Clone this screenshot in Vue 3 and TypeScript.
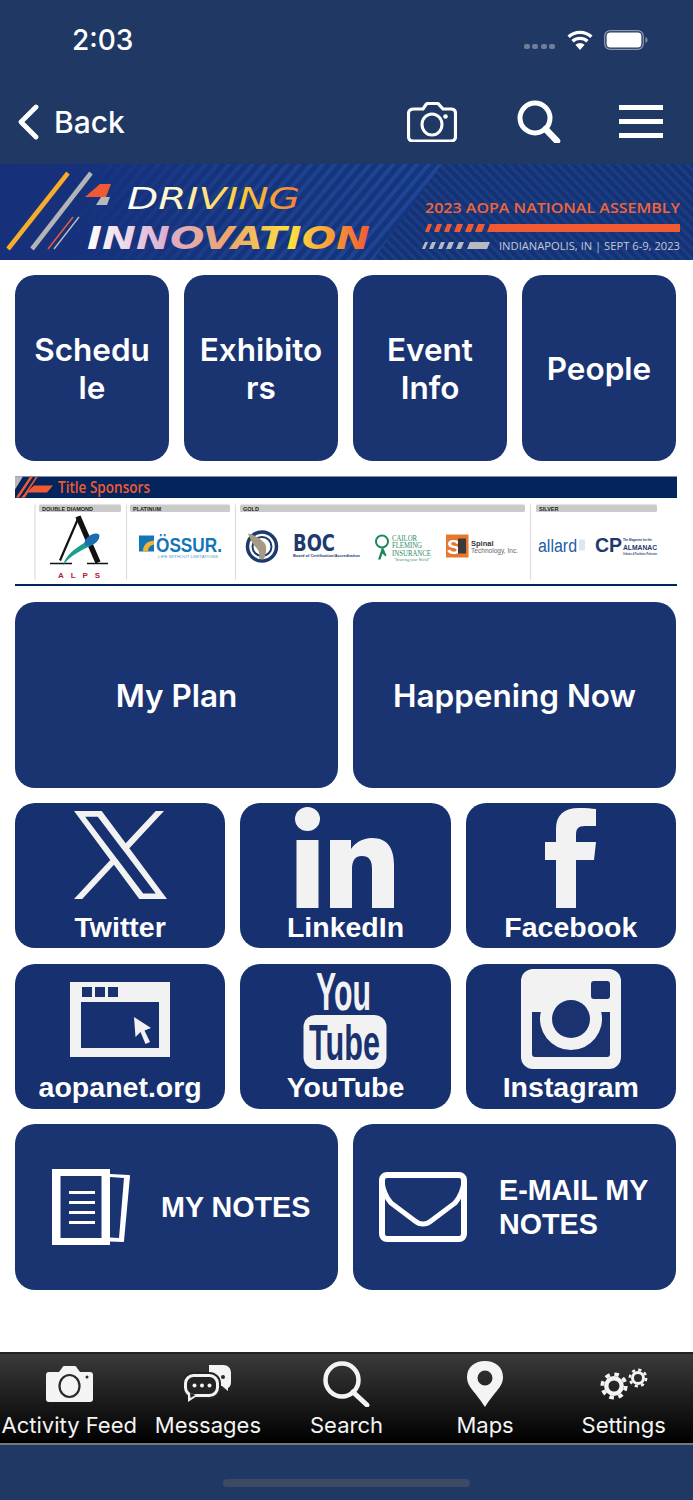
<script setup lang="ts">
const topTiles: string[][] = [['Schedu', 'le'], ['Exhibito', 'rs'], ['Event', 'Info'], ['People']]
const wideTiles: string[] = ['My Plan', 'Happening Now']
const tabs: string[] = ['Activity Feed', 'Messages', 'Search', 'Maps', 'Settings']
</script>

<template>
  <div class="page">
    <header class="head">
      <div class="status">
        <span class="time">2:03</span>
        <div class="status-icons">
          <span class="dots"><i></i><i></i><i></i><i></i></span>
          <svg class="wifi" width="28" height="20" viewBox="0 0 28 20">
            <path d="M14 20l-4.6-5.2a7 7 0 0 1 9.2 0z" fill="#fff" />
            <path d="M6.6 11.2a11 11 0 0 1 14.8 0M2.6 6.8a17 17 0 0 1 22.8 0" fill="none" stroke="#fff" stroke-width="3.4" />
          </svg>
          <svg class="battery" width="44" height="20" viewBox="0 0 44 20">
            <rect x="0.7" y="0.7" width="38.6" height="18.6" rx="5.5" fill="none" stroke="#8b97ad" stroke-width="1.3" />
            <rect x="2.6" y="2.6" width="34.8" height="14.8" rx="3.6" fill="#fff" />
            <path d="M41.5 7v6c1.3-.5 2-1.7 2-3s-.7-2.500-2-3z" fill="#8b97ad" />
          </svg>
        </div>
      </div>
      <nav class="nav">
        <div class="back">
          <svg width="22" height="36" viewBox="0 0 22 36"><path d="M19 3L4 18l15 15" fill="none" stroke="#fff" stroke-width="4.800" stroke-linecap="round" stroke-linejoin="round" /></svg>
          <span>Back</span>
        </div>
        <div class="nav-icons">
          <svg width="50" height="40" viewBox="0 0 50 40">
            <path d="M7 7h9l3-4.500c.4-.6 1-1 1.800-1h9.400c.8 0 1.400.4 1.800 1L36 7h8c2.800 0 4.500 1.700 4.500 4.500v23c0 2.800-1.700 4.500-4.500 4.500H6c-2.800 0-4.500-1.700-4.500-4.500v-23C1.500 8.700 3.500 7 7 7z" fill="none" stroke="#fff" stroke-width="3.200" />
            <ellipse cx="25" cy="22.500" rx="10" ry="10.500" fill="none" stroke="#fff" stroke-width="3" />
            <circle cx="38.500" cy="14.500" r="2.300" fill="#fff" />
          </svg>
          <svg width="44" height="43" viewBox="0 0 44 43">
            <circle cx="18" cy="18" r="15" fill="none" stroke="#fff" stroke-width="5" />
            <path d="M28.500 29L40 41" stroke="#fff" stroke-width="6.500" stroke-linecap="round" />
          </svg>
          <div class="burger"><i></i><i></i><i></i></div>
        </div>
      </nav>
    </header>

    <svg class="banner" width="693" height="96" viewBox="0 164 693 96">
      <defs>
        <pattern id="stripeA" width="9" height="9" patternUnits="userSpaceOnUse" patternTransform="rotate(-50)">
          <rect width="9" height="4" fill="#2a55a8" opacity=".55" />
        </pattern>
        <pattern id="stripeB" width="7" height="7" patternUnits="userSpaceOnUse" patternTransform="rotate(45)">
          <rect width="7" height="3" fill="#2b57ad" opacity=".3" />
        </pattern>
        <linearGradient id="leftBg" x1="0" y1="0" x2="1" y2="0">
          <stop offset="0" stop-color="#17307a" />
          <stop offset=".6" stop-color="#14367f" />
          <stop offset="1" stop-color="#0f44a0" />
        </linearGradient>
        <linearGradient id="fadeIn" x1="0" y1="0" x2="1" y2="0">
          <stop offset="0" stop-color="#fff" stop-opacity="0" />
          <stop offset=".5" stop-color="#fff" stop-opacity=".7" />
          <stop offset="1" stop-color="#fff" stop-opacity="1" />
        </linearGradient>
        <mask id="fadeMask">
          <rect x="60" y="164" width="390" height="96" fill="url(#fadeIn)" />
        </mask>
        <linearGradient id="driveFill" gradientUnits="userSpaceOnUse" x1="127" y1="0" x2="300" y2="0">
          <stop offset="0" stop-color="#ffffff" />
          <stop offset=".3" stop-color="#fff5c0" />
          <stop offset=".65" stop-color="#ffcd36" />
          <stop offset="1" stop-color="#f47c3c" />
        </linearGradient>
        <linearGradient id="innoFill" gradientUnits="userSpaceOnUse" x1="87" y1="0" x2="370" y2="0">
          <stop offset="0" stop-color="#ffffff" />
          <stop offset=".28" stop-color="#dcaed0" />
          <stop offset=".5" stop-color="#eda46b" />
          <stop offset=".72" stop-color="#fde23f" />
          <stop offset="1" stop-color="#f15a30" />
        </linearGradient>
      </defs>
      <rect x="0" y="164" width="693" height="96" fill="url(#leftBg)" />
      <rect x="60" y="164" width="390" height="96" fill="url(#stripeA)" mask="url(#fadeMask)" />
      <path d="M442 164H693V260H373z" fill="#143274" />
      <path d="M442 164H693V260H373z" fill="url(#stripeB)" />
      <path d="M68 173L8 249" stroke="#f7ac2a" stroke-width="4.500" />
      <path d="M91 173L32 249" stroke="#b3b4b8" stroke-width="4.500" />
      <path d="M73 217L48 249" stroke="#e85b37" stroke-width="1.500" />
      <path d="M79 217L54 249" stroke="#c2c2c6" stroke-width="1.300" />
      <path d="M100 184h11l-5 13H85z" fill="#ef5a32" />
      <path d="M101 197h9l-3 8H96z" fill="#b7b8bc" />
      <text class="b-drive" x="127" y="209" textLength="173" lengthAdjust="spacingAndGlyphs" fill="url(#driveFill)">DRIVING</text>
      <text class="b-inno" x="87" y="249" textLength="283" lengthAdjust="spacingAndGlyphs" fill="url(#innoFill)">INNOVATION</text>
      <text class="b-title" x="425" y="213" textLength="255" lengthAdjust="spacingAndGlyphs">2023 AOPA NATIONAL ASSEMBLY</text>
      <path d="M490 224H680V232H487z" fill="#ef5a32" />
      <g fill="#ef5a32">
        <path d="M428 224h4l-3 8h-4zM437 224h5l-3 8h-5zM447 224h5l-3 8h-5zM457 224h6l-3 8h-6zM468 224h6l-3 8h-6zM478 224h7l-3 8h-7z" />
      </g>
      <g fill="#b8bac2">
        <path d="M425 242h3l-3 7h-3zM432 242h4l-3 7h-4zM441 242h4l-3 7h-4zM449 242h5l-3 7h-5zM459 242h5l-3 7h-5zM470 242h20l-3 7h-20z" />
      </g>
      <text class="b-sub" x="499" y="250" textLength="181" lengthAdjust="spacingAndGlyphs">INDIANAPOLIS, IN | SEPT 6-9, 2023</text>
    </svg>

    <main class="content">
      <div class="row four">
        <button v-for="t in topTiles" :key="t.join('')" class="tile big">
          <span v-for="line in t" :key="line">{{ line }}</span>
        </button>
      </div>

      <svg class="sponsors" width="662" height="110" viewBox="15 476.500 662 110">
        <rect x="15" y="477" width="662" height="21.500" fill="#03245c" />
        <path d="M15 477h8l-8 13z" fill="#b9b9bd" />
        <path d="M30 477h3l-14 21h-3zM36 477h2l-14 21h-2z" fill="#ef5a32" />
        <path d="M34 486h19l-6 7H28l-3 5h-4z" fill="#ef5a32" />
        <text class="s-title" x="58" y="493" textLength="92" lengthAdjust="spacingAndGlyphs">Title Sponsors</text>
        <g fill="#cacaca">
          <rect x="39" y="505" width="82" height="7.500" rx="1.500" />
          <rect x="130" y="505" width="100" height="7.500" rx="1.500" />
          <rect x="240" y="505" width="285" height="7.500" rx="1.500" />
          <rect x="536" y="505" width="121" height="7.500" rx="1.500" />
        </g>
        <g fill="#222"><text class="s-label" x="42" y="511">DOUBLE DIAMOND</text><text class="s-label" x="133" y="511">PLATINUM</text><text class="s-label" x="243" y="511">GOLD</text><text class="s-label" x="539" y="511">SILVER</text></g>
        <g stroke="#dcdcdc" stroke-width="1.200"><path d="M35 505v75M126.500 505v75M235.500 505v75M530.500 505v75" /></g>
        <rect x="15" y="584.500" width="662" height="2.500" fill="#03245c" />

        <path d="M79 517L60 561" stroke="#111" stroke-width="2.200" fill="none" />
        <path d="M78 517L98 563" stroke="#111" stroke-width="5.500" fill="none" />
        <path d="M50 564h22M87 564h21" stroke="#111" stroke-width="1.600" />
        <path d="M63 566c2-10 12-17 22-23 5-3 10-6 14-8 1 5-3 9-8 11-10 5-21 10-28 20z" fill="#1c9c92" />
        <ellipse cx="92" cy="540" rx="8.500" ry="4.500" fill="#1e6cb0" transform="rotate(-35 92 540)" />
        <text class="s-alps" x="58" y="578" textLength="42" fill="#b5202f">ALPS</text>

        <rect x="139" y="536" width="15" height="16" fill="#1277b8" />
        <path d="M143 552c0-6 3-10 11-11v4c-4 1-6 3-6 7z" fill="#f2b233" />
        <text class="s-ossur" x="156" y="552" textLength="66" lengthAdjust="spacingAndGlyphs">ÖSSUR.</text>
        <text class="s-ossub" x="158" y="558" textLength="60" lengthAdjust="spacingAndGlyphs">LIFE WITHOUT LIMITATIONS</text>

        <circle cx="262" cy="547" r="14.500" fill="#fff" stroke="#1d3a6e" stroke-width="3.500" />
        <circle cx="262" cy="547" r="9.500" fill="none" stroke="#1d3a6e" stroke-width="2" />
        <path d="M248 534c6 1 12 5 16 9 3 3 3 8 0 17l-5-1c1-5 0-8-3-11-2-2-6-8-8-14z" fill="#a79a85" />
        <text class="s-boc" x="293" y="551" textLength="42" lengthAdjust="spacingAndGlyphs">BOC</text>
        <text class="s-bocsub" x="293" y="557" textLength="67" lengthAdjust="spacingAndGlyphs">Board of Certification/Accreditation</text>

        <circle cx="382" cy="542" r="6" fill="#fff" stroke="#1c8a5e" stroke-width="2" />
        <path d="M382 548l-4 12h2.500l2-6 3 3 1-1-3-7z" fill="#1c8a5e" />
        <g class="s-cailor">
          <text x="392" y="541" textLength="25" lengthAdjust="spacingAndGlyphs">CAILOR</text>
          <text x="392" y="548" textLength="30" lengthAdjust="spacingAndGlyphs">FLEMING</text>
          <text x="392" y="556" textLength="39" lengthAdjust="spacingAndGlyphs">INSURANCE</text>
        </g>
        <text class="s-cailsub" x="394" y="561">"Insuring your World"</text>

        <rect x="446" y="535" width="22.500" height="23" fill="#e8772e" />
        <text class="s-st" x="447" y="554">S</text>
        <rect x="458" y="539" width="8" height="15" fill="#3a3a3a" />
        <text class="s-spinal" x="471" y="546">Spinal</text>
        <text class="s-tech" x="471" y="553" textLength="47" lengthAdjust="spacingAndGlyphs">Technology, Inc.</text>

        <text class="s-allard" x="538" y="552" textLength="39" lengthAdjust="spacingAndGlyphs">allard</text>
        <rect x="579" y="540" width="6" height="11" fill="#dfe6f0" />
        <text class="s-cp" x="595" y="552">CP</text>
        <text class="s-alm" x="623" y="550" textLength="34" lengthAdjust="spacingAndGlyphs">ALMANAC</text>
        <text class="s-almt" x="623" y="541" textLength="29" lengthAdjust="spacingAndGlyphs">The Magazine for the</text>
        <text class="s-almt" x="623" y="555" textLength="34" lengthAdjust="spacingAndGlyphs">Orthotics &amp; Prosthetics Profession</text>
      </svg>

      <div class="row two">
        <button v-for="t in wideTiles" :key="t" class="tile big"><span>{{ t }}</span></button>
      </div>

      <div class="row three">
        <button class="tile social">
          <svg class="ico ico-x" width="93" height="88" viewBox="0 0 1200 1227" preserveAspectRatio="none">
            <path fill="#f2f2f2" d="M714.163 519.284L1160.89 0H1055.03L667.137 450.887L357.328 0H0L468.492 681.821L0 1226.37H105.866L515.491 750.218L842.672 1226.37H1200L714.137 519.284H714.163ZM569.165 687.828L521.697 619.934L144.011 79.6944H306.615L611.412 515.685L658.88 583.579L1055.08 1150.3H892.476L569.165 687.854V687.828Z" />
          </svg>
          <span>Twitter</span>
        </button>
        <button class="tile social">
          <svg class="ico ico-in" width="100" height="101" viewBox="0 0 100 101">
            <ellipse cx="12.500" cy="12" rx="12.500" ry="12" fill="#f2f2f2" />
            <rect x="1.500" y="33" width="22" height="68" fill="#f2f2f2" />
            <path d="M35 33h21v9c4-6 11-11 21-11 16 0 22 11 22 27v43H77V62c0-9-3-13-10-13-8 0-10 6-10 14v38H35z" fill="#f2f2f2" />
          </svg>
          <span>LinkedIn</span>
        </button>
        <button class="tile social">
          <svg class="ico ico-f" width="51" height="100" viewBox="0 0 51 100">
            <path d="M11 100V52H0V34h11V21C11 7 19 0 34 0c7 0 13 .5 17 1v17H40c-7 0-9 3-9 9v7h20l-2 18H31v48z" fill="#f2f2f2" />
          </svg>
          <span>Facebook</span>
        </button>
      </div>

      <div class="row three">
        <button class="tile social">
          <svg class="ico ico-web" width="100" height="75" viewBox="0 0 100 75">
            <path fill-rule="evenodd" d="M0 0h100v75H0zM11 20v46h78V20z" fill="#f2f2f2" />
            <path d="M12 5h10v10H12zM25 5h10v10H25zM38 5h10v10H38z" fill="#1a3370" />
            <path d="M64 35l17 11-6.500 2.500L80 60l-4.500 2-5-12-5 5z" fill="#f2f2f2" />
          </svg>
          <span>aopanet.org</span>
        </button>
        <button class="tile social">
          <svg class="ico ico-yt" width="190" height="116" viewBox="-53 -12 190 116">
            <text class="yt-you" x="13" y="41" textLength="55" lengthAdjust="spacingAndGlyphs">You</text>
            <rect x="0.500" y="46" width="83" height="54" rx="12" fill="#f2f2f2" />
            <text class="yt-tube" x="6" y="91" textLength="71" lengthAdjust="spacingAndGlyphs">Tube</text>
          </svg>
          <span>YouTube</span>
        </button>
        <button class="tile social">
          <svg class="ico ico-ig" width="100" height="100" viewBox="0 0 100 100">
            <rect width="100" height="100" rx="12" fill="#f2f2f2" />
            <rect x="70" y="12" width="19" height="18" rx="3" fill="#1a3370" />
            <path d="M11 43h8.800A31 31 0 1 0 80.200 43H89v42c0 2-1 3-3 3H14c-2 0-3-1-3-3z" fill="#1a3370" />
            <circle cx="50" cy="50" r="19" fill="#1a3370" />
          </svg>
          <span>Instagram</span>
        </button>
      </div>

      <div class="row two">
        <button class="tile note">
          <svg width="78" height="76" viewBox="0 0 78 76">
            <path fill-rule="evenodd" d="M0 0h58v76H0zM8.500 7v62h41V7z" fill="#fff" />
            <path d="M58 5l19 1c.7 0 1 .5 1 1.200L72 72c0 .7-.5 1-1 1l-13-.5v-4l9 .5 5-60-14-1z" fill="#fff" />
            <path d="M17 22h26v3H17zM17 32h26v3H17zM17 42h26v3H17zM17 52h26v3H17z" fill="#fff" />
          </svg>
          <span>MY NOTES</span>
        </button>
        <button class="tile note mail">
          <svg width="88" height="70" viewBox="0 0 88 70">
            <rect x="3" y="3" width="82" height="64" rx="5" fill="none" stroke="#fff" stroke-width="6" />
            <path d="M3 10c1 8 3 14 9 21l24 18c5 4 11 4 16 0l24-18c6-7 8-13 9-21" fill="none" stroke="#fff" stroke-width="5" />
          </svg>
          <span>E-MAIL MY<br />NOTES</span>
        </button>
      </div>
    </main>

    <footer class="tabbar">
      <div v-for="(label, i) in tabs" :key="label" class="tab">
        <div class="tab-ico">
          <svg v-if="i === 0" width="47" height="36" viewBox="0 0 47 36">
            <path d="M3 6h10l3-4c.5-1 1-2 2-2h11c1 0 1.500 1 2 2l3 4h10c2 0 3 1 3 3v24c0 2-1 3-3 3H3c-2 0-3-1-3-3V9c0-2 1-3 3-3z" fill="#f4f4f4" />
            <ellipse cx="23.500" cy="20" rx="10" ry="11" fill="none" stroke="#2a2a2a" stroke-width="2.200" />
            <circle cx="41" cy="11" r="1.500" fill="#2a2a2a" />
          </svg>
          <svg v-else-if="i === 1" width="48" height="38" viewBox="0 0 48 38">
            <path d="M25 0h14c5 0 8 3 8 8v9c0 3-1 5-3 6l0 3-6-5H25z" fill="#f4f4f4" />
            <circle cx="39" cy="12" r="2" fill="#2a2a2a" />
            <rect x="1.500" y="10.500" width="32" height="20" rx="8" fill="#252525" stroke="#252525" stroke-width="7" />
            <path d="M4 27v10l9-6z" fill="#f4f4f4" />
            <rect x="1.500" y="10.500" width="32" height="20" rx="8" fill="#252525" stroke="#f4f4f4" stroke-width="3" />
            <path d="M6 28l.5 5 5-3z" fill="#252525" />
            <circle cx="10.500" cy="20.500" r="2" fill="#f4f4f4" /><circle cx="18" cy="20.500" r="2" fill="#f4f4f4" /><circle cx="25.500" cy="20.500" r="2" fill="#f4f4f4" />
          </svg>
          <svg v-else-if="i === 2" width="47" height="46" viewBox="0 0 47 46">
            <circle cx="19" cy="19" r="16.500" fill="none" stroke="#f4f4f4" stroke-width="4.500" />
            <path d="M30 31l14 13" stroke="#f4f4f4" stroke-width="5" stroke-linecap="round" />
          </svg>
          <svg v-else-if="i === 3" width="36" height="46" viewBox="0 0 36 46">
            <path fill-rule="evenodd" d="M18 46C8 30 0 26 0 16 0 6 8 0 18 0s18 6 18 16c0 10-8 14-18 30zM18 9.500a7.500 7.500 0 1 0 0 15 7.500 7.500 0 0 0 0-15z" fill="#f4f4f4" />
          </svg>
          <svg v-else width="48" height="35" viewBox="0 0 48 35">
            <circle cx="14" cy="19" r="7.700" fill="none" stroke="#f4f4f4" stroke-width="4.400" />
            <circle cx="14" cy="19" r="11.700" fill="none" stroke="#f4f4f4" stroke-width="3.800" stroke-dasharray="4.600 4.590" />
            <circle cx="38" cy="11" r="5.500" fill="none" stroke="#f4f4f4" stroke-width="3" />
            <circle cx="38" cy="11" r="8.200" fill="none" stroke="#f4f4f4" stroke-width="2.400" stroke-dasharray="3.200 3.240" />
          </svg>
        </div>
        <span>{{ label }}</span>
      </div>
    </footer>

    <div class="home"><i></i></div>
  </div>
</template>

<style scoped>
.page {
  width: 693px;
  height: 1500px;
  display: flex;
  flex-direction: column;
  overflow: hidden;
  background: #fff;
  font-family: Inter, "Liberation Sans", sans-serif;
  color: #fff;
}
.head {
  background: #1f3864;
  height: 164px;
  flex: none;
}
.status {
  height: 78px;
  display: flex;
  align-items: center;
  justify-content: space-between;
  padding: 1px 45px 0 72px;
  box-sizing: border-box;
}
.time {
  font-size: 28px;
  font-weight: 500;
}
.status-icons {
  display: flex;
  align-items: center;
}
.dots {
  display: flex;
  gap: 2.500px;
  margin: 14px 11px 0 0;
}
.dots i {
  width: 6px;
  height: 5px;
  border-radius: 2px;
  background: #6f7d98;
}
.wifi {
  margin-right: 10px;
}
.nav {
  height: 86px;
  display: flex;
  align-items: center;
  justify-content: space-between;
  padding: 1px 30px 0 17px;
  box-sizing: border-box;
}
.back {
  display: flex;
  align-items: center;
  gap: 15px;
  font-size: 30px;
  font-weight: 500;
}
.nav-icons {
  display: flex;
  align-items: center;
  gap: 60px;
}
.burger {
  width: 44px;
  margin-left: -2px;
  display: flex;
  flex-direction: column;
  gap: 9px;
}
.burger i {
  height: 5px;
  background: #fff;
}
.banner {
  display: block;
  flex: none;
}
.b-drive {
  font: oblique 200 31px "DejaVu Sans", sans-serif;
}
.b-inno {
  font: oblique 700 31.500px "DejaVu Sans", sans-serif;
}
.b-title {
  font: 600 15px "Open Sans", sans-serif;
  fill: #f1653a;
}
.b-sub {
  font: 400 11px "Open Sans", sans-serif;
  fill: #c4c9d6;
}
.content {
  padding: 15px 17px 15px 15px;
  display: flex;
  flex-direction: column;
  gap: 15.4px;
}
.row {
  display: grid;
  gap: 15px;
}
.four {
  grid-template-columns: repeat(4, 1fr);
}
.two {
  grid-template-columns: repeat(2, 1fr);
}
.three {
  grid-template-columns: repeat(3, 1fr);
}
.tile {
  border: 0;
  padding: 0;
  color: #fff;
  background: #1a3472;
  border-radius: 20px;
  display: flex;
  flex-direction: column;
  align-items: center;
  font-family: inherit;
}
.big {
  height: 186px;
  padding-top: 2px;
  box-sizing: border-box;
  justify-content: center;
  font-size: 31.500px;
  font-weight: 600;
  line-height: 38px;
}
.social {
  height: 145px;
  background: #163070;
  font-family: "Liberation Sans", sans-serif;
  font-size: 28.500px;
  font-weight: 700;
  line-height: 34px;
  position: relative;
}
.social span {
  position: absolute;
  left: 0;
  right: 0;
  bottom: 4.500px;
}
.ico {
  display: block;
  flex: none;
}
.ico-x {
  margin-top: 8px;
}
.ico-in {
  margin-top: 4px;
}
.ico-f {
  margin-top: 5px;
}
.ico-web {
  margin-top: 18px;
}
.ico-yt {
  margin-top: -7px;
}
.ico-ig {
  margin-top: 5px;
}
.note {
  height: 166px;
  flex-direction: row;
  padding-left: 37px;
  gap: 31px;
  font-family: "Liberation Sans", sans-serif;
  font-size: 28.700px;
  font-weight: 700;
  line-height: 34px;
  text-align: left;
}
.mail {
  gap: 32px;
  padding-left: 26px;
}
.sponsors {
  display: block;
  flex: none;
  margin-right: -1px;
}
.s-title {
  font: 600 16.500px "Open Sans", sans-serif;
  fill: #ef5a32;
}
.s-label {
  font: 700 5.500px "Liberation Sans", sans-serif;
}
.s-alps {
  font: 700 8px "Liberation Sans", sans-serif;
}
.s-ossur {
  font: 700 20px "Liberation Sans", sans-serif;
  fill: #1277b8;
}
.s-ossub {
  font: 400 4px "Liberation Sans", sans-serif;
  fill: #4f9ccc;
}
.s-boc {
  font: 700 23px "DejaVu Sans", sans-serif;
  fill: #1d3a6e;
}
.s-bocsub {
  font: 700 3.500px "Liberation Sans", sans-serif;
  fill: #1d3a6e;
}
.s-cailor {
  font: 400 7.500px "Liberation Serif", serif;
  fill: #2a8a66;
}
.s-cailsub {
  font: italic 400 4px "Liberation Serif", serif;
  fill: #2a8a66;
}
.s-st {
  font: 700 20px "Liberation Sans", sans-serif;
  fill: #fff;
}
.s-spinal {
  font: 700 7.500px "Liberation Sans", sans-serif;
  fill: #333;
}
.s-tech {
  font: 400 6.500px "Liberation Sans", sans-serif;
  fill: #666;
}
.s-allard {
  font: 400 18px "Liberation Sans", sans-serif;
  fill: #1d5da6;
}
.s-cp {
  font: 700 19.500px "Liberation Sans", sans-serif;
  fill: #1d3a6e;
}
.s-alm {
  font: 700 6.500px "Liberation Sans", sans-serif;
  fill: #1d3a6e;
}
.s-almt {
  font: 700 3px "Liberation Sans", sans-serif;
  fill: #1d3a6e;
}
.yt-you {
  font: 700 54px "Liberation Sans", sans-serif;
  fill: #f2f2f2;
}
.yt-tube {
  font: 700 50px "Liberation Sans", sans-serif;
  fill: #1a3370;
}
.tabbar {
  margin-top: auto;
  height: 93px;
  flex: none;
  display: flex;
  background: linear-gradient(#3a3a3a, #000);
  border-top: 2px solid #222;
  border-bottom: 2px solid #777;
  box-sizing: border-box;
}
.tab {
  flex: 1;
  display: flex;
  flex-direction: column;
  align-items: center;
  font-size: 22px;
  white-space: nowrap;
  color: #f4f4f4;
}
.tab-ico {
  height: 58px;
  display: flex;
  align-items: center;
  padding-top: 2px;
  box-sizing: border-box;
}
.home {
  height: 55px;
  flex: none;
  background: #1f3864;
  display: flex;
  justify-content: center;
  padding-top: 34px;
  box-sizing: border-box;
}
.home i {
  width: 247px;
  height: 8px;
  border-radius: 4px;
  background: #3d4a66;
}
</style>

<style>
body {
  margin: 0;
}
</style>
